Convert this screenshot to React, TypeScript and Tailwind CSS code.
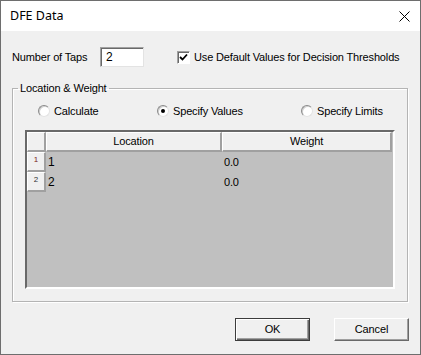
import React from "react";

const font = { fontFamily: '"Liberation Sans", Arial, sans-serif' };

function Radio({ checked }: { checked?: boolean }) {
  return (
    <span className="relative inline-block shrink-0 w-[12px] h-[12px] rounded-full border border-t-[#8a8a8a] border-l-[#8a8a8a] border-r-[#e3e3e3] border-b-[#e3e3e3] bg-white shadow-[inset_1px_1px_0_#d0d0d0]">
      {checked && (
        <span className="absolute left-[3px] top-[3px] w-[4px] h-[4px] rounded-full bg-black" />
      )}
    </span>
  );
}

function HeaderCell({ children, className = "" }: { children?: React.ReactNode; className?: string }) {
  return (
    <div
      className={
        "bg-[#f0f0f0] border-t border-l border-t-white border-l-white border-r-2 border-b-2 border-r-[#a0a0a0] border-b-[#a0a0a0] flex items-center justify-center " +
        className
      }
    >
      {children}
    </div>
  );
}

export default function App() {
  return (
    <div
      className="w-[421px] h-[355px] flex flex-col border border-[#6e6e6e] bg-[#f0f0f0] text-[11px] tracking-[-0.15px] text-black whitespace-nowrap"
      style={font}
    >
      {/* Title bar */}
      <div className="h-[30px] bg-white flex items-center justify-between pl-[9px] pr-[10px]">
        <span className="text-[12.5px] tracking-normal" style={{ fontFamily: '"Noto Sans", "Open Sans", sans-serif' }}>
          DFE Data
        </span>
        <svg width="11" height="11" viewBox="0 0 11 11">
          <path d="M0.5 0.5 L10.5 10.5 M10.5 0.5 L0.5 10.5" stroke="#000" strokeWidth="1" />
        </svg>
      </div>

      {/* Body */}
      <div className="flex-1 flex flex-col px-[11px]">
        <div className="mt-[16px] h-[20px] flex items-center">
          <span className="w-[88px]">Number of Taps</span>
          <div className="w-[44px] h-[20px] bg-white border border-t-[#a0a0a0] border-l-[#a0a0a0] border-r-[#e3e3e3] border-b-[#e3e3e3] shadow-[inset_1px_1px_0_#696969] flex items-center pl-[5px] text-[12px]">
            2
          </div>
          <div className="ml-[33px] flex items-center">
            <span className="w-[13px] h-[13px] bg-white border border-t-[#a0a0a0] border-l-[#a0a0a0] border-r-white border-b-white shadow-[inset_1px_1px_0_#696969] flex items-center justify-center">
              <svg width="9" height="9" viewBox="0 0 9 9">
                <path d="M1 4 L3.5 6.5 L8 1.5" stroke="#000" strokeWidth="1.8" fill="none" />
              </svg>
            </span>
            <span className="ml-[4px]">Use Default Values for Decision Thresholds</span>
          </div>
        </div>

        <fieldset className="mt-[14px] border border-[#b4b4b4] shadow-[inset_1px_1px_0_#fff,1px_1px_0_#fff] p-0 m-0 w-[396px]">
          <legend className="ml-[5px] px-[2px] leading-[14px]">Location &amp; Weight</legend>
          <div className="px-[12px] pb-[12px]">
            <div className="mt-[8px] h-[16px] flex items-center pl-[13px]">
              <div className="w-[119px] flex items-center gap-[4px]">
                <Radio />
                <span>Calculate</span>
              </div>
              <div className="w-[144px] flex items-center gap-[4px]">
                <Radio checked />
                <span>Specify Values</span>
              </div>
              <div className="flex items-center gap-[4px]">
                <Radio />
                <span>Specify Limits</span>
              </div>
            </div>

            <div className="mt-[11px] h-[159px] w-[370px] border-2 border-t-[#696969] border-l-[#696969] border-r-white border-b-white bg-[#c0c0c0] grid grid-cols-[19px_176px_1fr] grid-rows-[20px_20px_20px] content-start">
              <HeaderCell />
              <HeaderCell>Location</HeaderCell>
              <HeaderCell className="mr-[1px]">Weight</HeaderCell>

              <HeaderCell className="!items-start pt-[2px]">
                <span className="text-[8px] leading-[9px] text-[#7a1a1a]">1</span>
              </HeaderCell>
              <div className="flex items-center pl-[2px] text-[12px]">1</div>
              <div className="flex items-center pl-[2px]">0.0</div>

              <HeaderCell className="!items-start pt-[2px]">
                <span className="text-[8px] leading-[9px] text-[#333]">2</span>
              </HeaderCell>
              <div className="flex items-center pl-[2px] text-[12px]">2</div>
              <div className="flex items-center pl-[2px]">0.0</div>
            </div>
          </div>
        </fieldset>

        <div className="mt-[16px] flex justify-end gap-[24px]">
          <button className="w-[75px] h-[23px] bg-[#f0f0f0] border border-[#3c3c3c] shadow-[inset_1px_1px_0_#fff,inset_-1px_-1px_0_#696969,inset_-2px_-2px_0_#a0a0a0] text-[11px]">
            OK
          </button>
          <button className="w-[75px] h-[23px] bg-[#f0f0f0] border border-t-white border-l-white border-r-[#696969] border-b-[#696969] shadow-[inset_-1px_-1px_0_#a0a0a0] text-[11px]">
            Cancel
          </button>
        </div>
      </div>
    </div>
  );
}
